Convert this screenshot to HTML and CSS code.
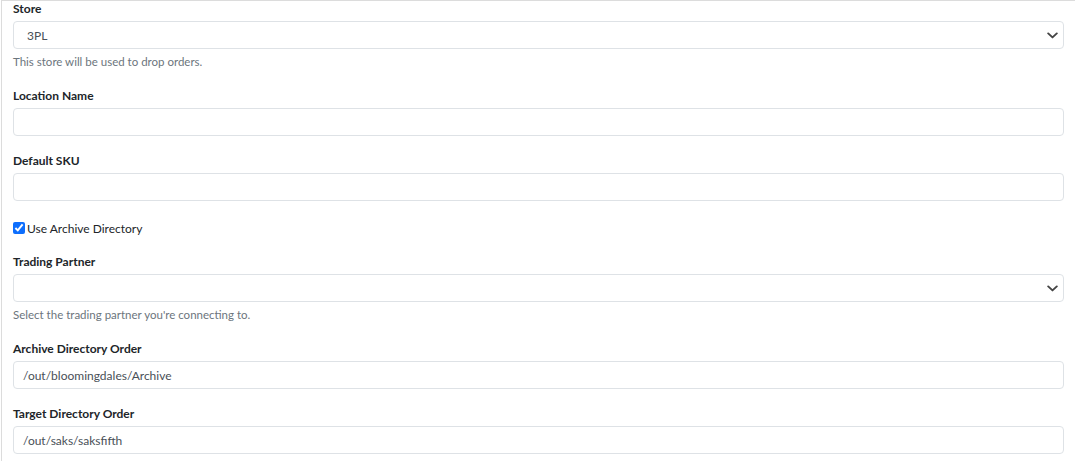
FILE: index.html
```html
<!DOCTYPE html>
<html lang="en">
<head>
<meta charset="utf-8">
<title>Location settings</title>
<link rel="stylesheet" href="styles.css">
</head>
<body>
<div class="panel">
  <div class="group has-help">
    <div class="label">Store</div>
    <div class="control select">
      <span class="select-value">3PL</span>
      <svg class="chevron" width="11" height="7" viewBox="0 0 11 7"><path d="M1.2 1.4 L5.5 5.4 L9.8 1.4" fill="none" stroke="#444" stroke-width="1.9" stroke-linecap="round" stroke-linejoin="round"/></svg>
    </div>
    <div class="help">This store will be used to drop orders.</div>
  </div>

  <div class="group">
    <div class="label">Location Name</div>
    <div class="control input"></div>
  </div>

  <div class="group">
    <div class="label">Default SKU</div>
    <div class="control input"></div>
  </div>

  <label class="check">
    <input type="checkbox" checked>
    <span>Use Archive Directory</span>
  </label>

  <div class="group has-help">
    <div class="label">Trading Partner</div>
    <div class="control select">
      <span class="select-value"></span>
      <svg class="chevron" width="11" height="7" viewBox="0 0 11 7"><path d="M1.2 1.4 L5.5 5.4 L9.8 1.4" fill="none" stroke="#444" stroke-width="1.9" stroke-linecap="round" stroke-linejoin="round"/></svg>
    </div>
    <div class="help">Select the trading partner you're connecting to.</div>
  </div>

  <div class="group">
    <div class="label">Archive Directory Order</div>
    <div class="control input"><span class="input-value">/out/bloomingdales/Archive</span></div>
  </div>

  <div class="group">
    <div class="label">Target Directory Order</div>
    <div class="control input"><span class="input-value">/out/saks/saksfifth</span></div>
  </div>
</div>
</body>
</html>
```
FILE: styles.css
```css
html, body {
  margin: 0;
  padding: 0;
  background: #ffffff;
}
body {
  font-family: Lato, "Liberation Sans", sans-serif;
  color: #212529;
  overflow: hidden;
}
.panel {
  margin-left: 1px;
  border-top: 1px solid #dcdcdc;
  border-left: 1px solid #dcdcdc;
  padding: 0 11px 0 11px;
  min-height: 461px;
  box-sizing: border-box;
}
.group {
  margin-bottom: 17px;
}
.group.has-help {
  margin-bottom: 18px;
}
.label {
  font-size: 12px;
  font-weight: 700;
  line-height: 16px;
  margin-bottom: 4px;
  color: #212529;
}
.control {
  box-sizing: border-box;
  height: 28px;
  border: 1px solid #dee2e6;
  border-radius: 4px;
  background: #fff;
  display: flex;
  align-items: center;
}
.select {
  justify-content: space-between;
  padding: 0 5px 0 13px;
}
.select-value {
  font-size: 12px;
  color: #495057;
}
.chevron {
  display: block;
}
.input {
  padding: 0 9px;
}
.input-value {
  font-size: 12px;
  color: #495057;
}
.help {
  margin-top: 5px;
  font-size: 11.5px;
  line-height: 16px;
  color: #6c757d;
}
.check {
  display: flex;
  align-items: center;
  height: 16px;
  margin-top: 19px;
  margin-bottom: 18px;
  font-size: 12px;
  color: #212529;
}
.check input {
  margin: 0 2px 0 0;
  width: 12px;
  height: 12px;
  accent-color: #0d6efd;
}
```
